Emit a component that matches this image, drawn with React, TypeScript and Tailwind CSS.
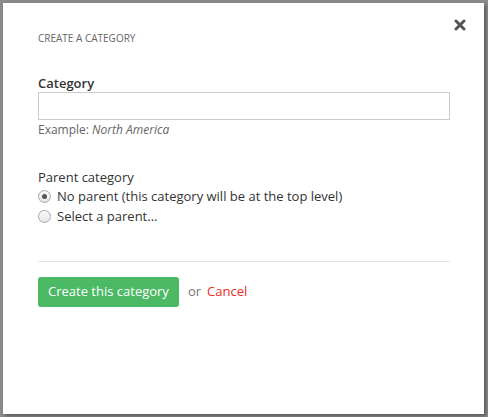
import { useState } from "react";

function Radio({ checked, onChange, label }: { checked: boolean; onChange: () => void; label: string }) {
  return (
    <label className="flex items-center gap-[6px]">
      <input type="radio" name="parent" checked={checked} onChange={onChange} className="sr-only" />
      <span className="flex h-[13px] w-[13px] items-center justify-center rounded-full border border-[#a9a9a9] bg-[linear-gradient(#fafafa,#e6e6e6)]">
        {checked && <span className="h-[5px] w-[5px] rounded-full bg-[#555]" />}
      </span>
      {label}
    </label>
  );
}

export default function App() {
  const [parent, setParent] = useState("none");
  return (
    <div className="h-[417px] w-[488px] overflow-hidden bg-[#8a8a8a] pl-[3px] pt-[3px] font-['Open_Sans',sans-serif]">
      <div className="relative h-[411px] w-[481px] bg-white px-[35px] pt-[27px] shadow-[2px_2px_3px_rgba(0,0,0,0.35)]">
        <button className="absolute right-[18px] top-[16px] text-[#555]" aria-label="Close">
          <svg width="12" height="12" viewBox="0 0 12 12">
            <path d="M2 2 L10 10 M10 2 L2 10" stroke="currentColor" strokeWidth="3" strokeLinecap="round" />
          </svg>
        </button>
        <h3 className="text-[10px] uppercase leading-[16px] text-[#666]">Create a category</h3>

        <label className="mt-[28px] block text-[13px] font-semibold leading-[18px] text-[#333]">Category</label>
        <input className="block h-[28px] w-[412px] border border-[#ccc] px-2 text-[13px] outline-none" />
        <p className="mt-[1px] text-[12px] leading-[17px] text-[#666]">
          Example: <em>North America</em>
        </p>

        <p className="mt-[30px] text-[13px] leading-[18px] text-[#333]">Parent category</p>
        <div className="flex flex-col text-[13px] leading-[20px] text-[#333]">
          <Radio
            checked={parent === "none"}
            onChange={() => setParent("none")}
            label="No parent (this category will be at the top level)"
          />
          <Radio checked={parent === "select"} onChange={() => setParent("select")} label="Select a parent..." />
        </div>

        <hr className="mt-[35px] w-[412px] border-[#e5e5e5]" />

        <div className="mt-[15px] flex items-center text-[13px]">
          <button className="h-[30px] rounded-[3px] bg-[#4cb964] px-[10px] text-white">Create this category</button>
          <span className="ml-[9px] text-[#777]">or</span>
          <a href="#" className="ml-[6px] text-[#ee2a2a]">
            Cancel
          </a>
        </div>
      </div>
    </div>
  );
}
